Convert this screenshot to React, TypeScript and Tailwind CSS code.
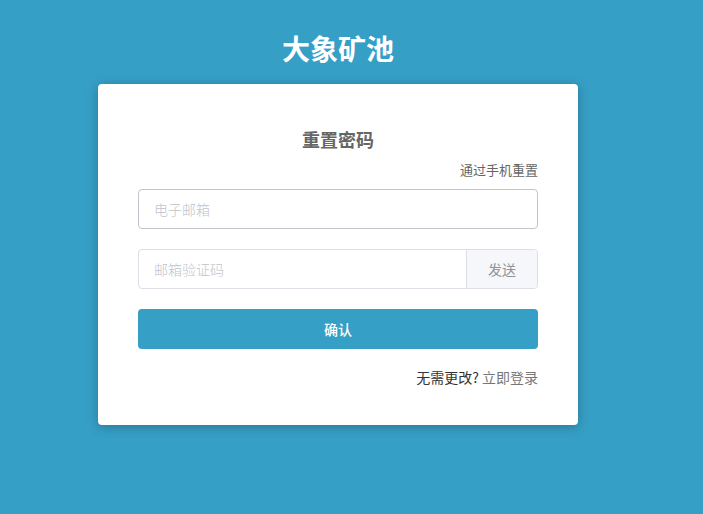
export default function App() {
  return (
    <div
      className="min-h-[514px] w-full bg-[#369fc6] pt-[29px]"
      style={{ fontFamily: '"Noto Sans CJK SC", "Noto Sans", sans-serif' }}
    >
      <div className="ml-[98px] w-[480px]">
        <h1 className="h-[38px] text-center text-[28px] font-semibold leading-[38px] text-white">大象矿池</h1>
        <div className="mt-[17px] rounded-[4px] bg-white px-[40px] pb-[38px] pt-[40px] shadow-[0_2px_12px_rgba(0,0,0,0.25)]">
          <h2 className="text-center text-[18px] font-bold leading-[30px] text-[#666]">重置密码</h2>
          <div className="mt-[6px] text-right text-[13px] leading-[20px] text-[#666]">通过手机重置</div>
          <input
            placeholder="电子邮箱"
            className="mt-[9px] block h-[40px] w-full rounded-[4px] border border-[#c0c4cc] px-[15px] text-[14px] text-[#606266] outline-none placeholder:font-light placeholder:text-[#c0c4cc]"
          />
          <div className="mt-[20px] flex h-[40px] rounded-[4px] border border-[#dcdfe6]">
            <input
              placeholder="邮箱验证码"
              className="min-w-0 flex-1 rounded-l-[4px] px-[15px] text-[14px] text-[#606266] outline-none placeholder:font-light placeholder:text-[#c0c4cc]"
            />
            <button className="w-[71px] rounded-r-[4px] border-l border-[#dcdfe6] bg-[#f5f7fa] text-[14px] text-[#909399]">
              发送
            </button>
          </div>
          <button className="mt-[20px] block h-[40px] w-full rounded-[4px] bg-[#369fc6] text-[14px] font-medium text-white">
            确认
          </button>
          <div className="mt-[18px] text-right text-[14px] leading-[20px]">
            <span className="text-[#333]">无需更改? </span>
            <span className="text-[#777]">立即登录</span>
          </div>
        </div>
      </div>
    </div>
  )
}
